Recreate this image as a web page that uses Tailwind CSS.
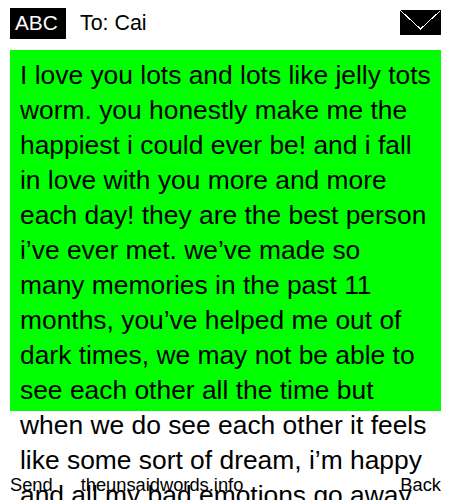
<!DOCTYPE html>
<html>
<head>
<meta charset="utf-8">
<script src="https://cdn.jsdelivr.net/npm/@tailwindcss/browser@4"></script>
</head>
<body class="bg-white">
<div class="relative h-[500px] w-[450px] overflow-hidden bg-white font-['Liberation_Sans',Arial,sans-serif] text-black">
  <header class="flex h-[50px] items-start pl-[10px] pr-[9px] pt-[8px]">
    <div class="flex h-[31px] w-[56px] items-center bg-black pl-[5px] text-[20.8px] leading-none text-white">ABC</div>
    <div class="ml-[14px] flex h-[31px] items-center text-[21.4px] leading-none">To: Cai</div>
    <svg class="ml-auto mt-[2px] h-[25px] w-[41px]" viewBox="0 0 41 25" shape-rendering="crispEdges">
      <rect width="41" height="25" fill="#000"/>
      <path d="M0.5 0.5 L20.5 19 L40.5 0.5" fill="none" stroke="#fff" stroke-width="1"/>
    </svg>
  </header>
  <main class="ml-[10px] h-[361px] w-[431px] bg-[#00ff00] px-[10px] pt-[8px]">
    <p class="text-[26.4px] leading-[35px]">I love you lots and lots like jelly tots worm. you honestly make me the happiest i could ever be! and i fall in love with you more and more each day! they are the best person i’ve ever met. we’ve made so many memories in the past 11 months, you’ve helped me out of dark times, we may not be able to see each other all the time but when we do see each other it feels like some sort of dream, i’m happy and all my bad emotions go away</p>
  </main>
  <footer class="absolute bottom-[5px] left-[10px] right-[9px] flex items-center text-[18.3px] leading-[20px]">
    <span>Send</span>
    <span class="ml-[28px]">theunsaidwords.info</span>
    <span class="ml-auto">Back</span>
  </footer>
</div>
</body>
</html>
